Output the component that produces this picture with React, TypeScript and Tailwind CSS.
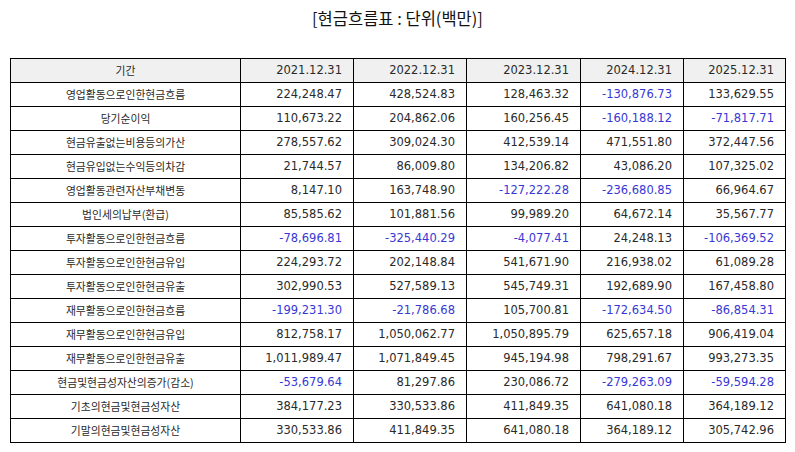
import React from "react";

const headers = ["2021.12.31", "2022.12.31", "2023.12.31", "2024.12.31", "2025.12.31"];

const rows: [string, string[]][] = [
  ["영업활동으로인한현금흐름", ["224,248.47", "428,524.83", "128,463.32", "-130,876.73", "133,629.55"]],
  ["당기순이익", ["110,673.22", "204,862.06", "160,256.45", "-160,188.12", "-71,817.71"]],
  ["현금유출없는비용등의가산", ["278,557.62", "309,024.30", "412,539.14", "471,551.80", "372,447.56"]],
  ["현금유입없는수익등의차감", ["21,744.57", "86,009.80", "134,206.82", "43,086.20", "107,325.02"]],
  ["영업활동관련자산부채변동", ["8,147.10", "163,748.90", "-127,222.28", "-236,680.85", "66,964.67"]],
  ["법인세의납부(환급)", ["85,585.62", "101,881.56", "99,989.20", "64,672.14", "35,567.77"]],
  ["투자활동으로인한현금흐름", ["-78,696.81", "-325,440.29", "-4,077.41", "24,248.13", "-106,369.52"]],
  ["투자활동으로인한현금유입", ["224,293.72", "202,148.84", "541,671.90", "216,938.02", "61,089.28"]],
  ["투자활동으로인한현금유출", ["302,990.53", "527,589.13", "545,749.31", "192,689.90", "167,458.80"]],
  ["재무활동으로인한현금흐름", ["-199,231.30", "-21,786.68", "105,700.81", "-172,634.50", "-86,854.31"]],
  ["재무활동으로인한현금유입", ["812,758.17", "1,050,062.77", "1,050,895.79", "625,657.18", "906,419.04"]],
  ["재무활동으로인한현금유출", ["1,011,989.47", "1,071,849.45", "945,194.98", "798,291.67", "993,273.35"]],
  ["현금및현금성자산의증가(감소)", ["-53,679.64", "81,297.86", "230,086.72", "-279,263.09", "-59,594.28"]],
  ["기초의현금및현금성자산", ["384,177.23", "330,533.86", "411,849.35", "641,080.18", "364,189.12"]],
  ["기말의현금및현금성자산", ["330,533.86", "411,849.35", "641,080.18", "364,189.12", "305,742.96"]],
];

export default function App() {
  return (
    <div className="w-[795px] h-[452px] bg-white text-[#2a2a2a] font-['DejaVu_Sans','Noto_Sans_CJK_KR',sans-serif]">
      <div className="pt-[6px] h-[58px] text-center text-[16.5px] leading-[24px] text-[#111] font-['Noto_Sans_CJK_KR',sans-serif]">
        [현금흐름표 : 단위(백만)]
      </div>
      <div className="px-[10px]">
        <table className="w-[775px] table-fixed border-collapse border border-black">
          <colgroup>
            <col className="w-[230px]" />
            <col className="w-[113px]" />
            <col className="w-[113px]" />
            <col className="w-[114px]" />
            <col className="w-[103px]" />
            <col className="w-[102px]" />
          </colgroup>
          <thead>
            <tr className="bg-[#f0f0f0] h-[24px]">
              <th className="border border-black p-0 font-normal text-center text-[10.8px] font-['Noto_Sans_CJK_KR',sans-serif]">
                기간
              </th>
              {headers.map((h) => (
                <th key={h} className="border border-black p-0 pr-[11px] font-normal text-right text-[11.5px]">
                  {h}
                </th>
              ))}
            </tr>
          </thead>
          <tbody>
            {rows.map(([label, vals]) => (
              <tr key={label} className="h-[24px]">
                <td className="border border-black p-0 text-center text-[10.8px] font-['Noto_Sans_CJK_KR',sans-serif]">
                  {label}
                </td>
                {vals.map((v, i) => (
                  <td
                    key={i}
                    className={
                      v.startsWith("-")
                        ? "border border-black p-0 pr-[11px] text-right text-[11.5px] text-[#3838d4]"
                        : "border border-black p-0 pr-[11px] text-right text-[11.5px]"
                    }
                  >
                    {v}
                  </td>
                ))}
              </tr>
            ))}
          </tbody>
        </table>
      </div>
    </div>
  );
}
